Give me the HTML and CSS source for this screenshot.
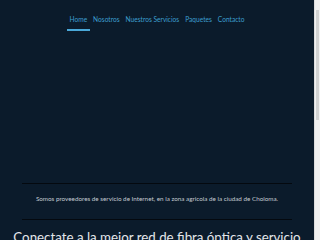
FILE: index.html
```html
<!DOCTYPE html>
<html lang="es">

<head>
  <meta charset="UTF-8">
  <meta name="viewport" content="width=device-width, initial-scale=1.0">
  <title>Fibra Choloma</title>
  <link rel="stylesheet" href="styles.css">
</head>

<body>
  <header id="topbar">
    <nav>
      <ul class="menu">
        <li><a href="#" class="active">Home</a></li>
        <li><a href="#">Nosotros</a></li>
        <li><a href="#">Nuestros Servicios</a></li>
        <li><a href="#">Paquetes</a></li>
        <li><a href="#">Contacto</a></li>
      </ul>
    </nav>
  </header>

  <div class="hero"></div>

  <section class="intro">
    <p>Somos proveedores de servicio de Internet, en la zona agricola de la ciudad de Choloma.</p>
  </section>

  <section class="features">
    <h2>Conectate a la mejor red de fibra óptica y servicio de internet</h2>
  </section>

  <div class="scrollbar"><span class="thumb"></span></div>
</body>

</html>
```

FILE: styles.css
```css
body {
  font-family: 'Lato', sans-serif;
  margin: 0;
  padding: 0 6px 0 0;
  background-color: #0b1b2b;
  color: #d6dbe0;
}

#topbar {
  padding-top: 15px;
}

.menu {
  list-style: none;
  margin: 0;
  padding: 0;
  display: flex;
  justify-content: center;
}

.menu a {
  display: block;
  padding: 0 3px 6px;
  font-size: 6.6px;
  line-height: 8px;
  color: #3d9fd0;
  text-decoration: none;
  border-bottom: 2px solid transparent;
}

.menu a.active {
  border-bottom-color: #4aa8d8;
}

.hero {
  height: 152px;
}

.intro {
  margin: 0 22px;
  border-top: 1px solid #04090f;
  border-bottom: 1px solid #04090f;
  padding: 11px 0 16px;
  text-align: center;
}

.intro p {
  margin: 0;
  font-size: 6.3px;
  line-height: 8px;
  color: #c3cad1;
}

.features {
  padding: 9px 10px 40px;
  text-align: center;
}

.features h2 {
  margin: 0;
  font-size: 13.3px;
  font-weight: 400;
  color: #e3e6ea;
}

/* fake browser scrollbar */
.scrollbar {
  position: fixed;
  top: 0;
  right: 0;
  width: 5px;
  height: 100%;
  background: #f1f1f1;
  border-left: 1px solid #dedede;
}

.thumb {
  position: absolute;
  top: 10px;
  left: 1px;
  width: 3px;
  height: 110px;
  background: #d2d2d2;
}
```
